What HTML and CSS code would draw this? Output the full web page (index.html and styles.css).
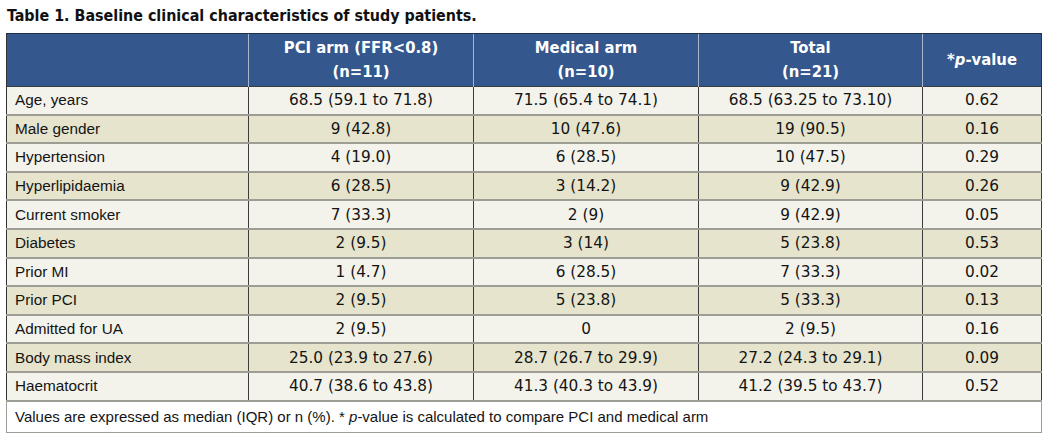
FILE: index.html
```html
<!DOCTYPE html>
<html>
<head>
<meta charset="utf-8">
<link rel="stylesheet" href="styles.css">
</head>
<body>
<div class="page">
  <h1 class="title">Table 1. Baseline clinical characteristics of study patients.</h1>
  <table class="data">
    <colgroup>
      <col class="c1"><col class="c2"><col class="c3"><col class="c4"><col class="c5">
    </colgroup>
    <thead>
      <tr>
        <th></th>
        <th>PCI arm (FFR&lt;0.8)<br>(n=11)</th>
        <th>Medical arm<br>(n=10)</th>
        <th>Total<br>(n=21)</th>
        <th><i>*p</i>-value</th>
      </tr>
    </thead>
    <tbody>
      <tr class="odd"><td>Age, years</td><td>68.5 (59.1 to 71.8)</td><td>71.5 (65.4 to 74.1)</td><td>68.5 (63.25 to 73.10)</td><td>0.62</td></tr>
      <tr class="even"><td>Male gender</td><td>9 (42.8)</td><td>10 (47.6)</td><td>19 (90.5)</td><td>0.16</td></tr>
      <tr class="odd"><td>Hypertension</td><td>4 (19.0)</td><td>6 (28.5)</td><td>10 (47.5)</td><td>0.29</td></tr>
      <tr class="even"><td>Hyperlipidaemia</td><td>6 (28.5)</td><td>3 (14.2)</td><td>9 (42.9)</td><td>0.26</td></tr>
      <tr class="odd"><td>Current smoker</td><td>7 (33.3)</td><td>2 (9)</td><td>9 (42.9)</td><td>0.05</td></tr>
      <tr class="even"><td>Diabetes</td><td>2 (9.5)</td><td>3 (14)</td><td>5 (23.8)</td><td>0.53</td></tr>
      <tr class="odd"><td>Prior MI</td><td>1 (4.7)</td><td>6 (28.5)</td><td>7 (33.3)</td><td>0.02</td></tr>
      <tr class="even"><td>Prior PCI</td><td>2 (9.5)</td><td>5 (23.8)</td><td>5 (33.3)</td><td>0.13</td></tr>
      <tr class="odd"><td>Admitted for UA</td><td>2 (9.5)</td><td>0</td><td>2 (9.5)</td><td>0.16</td></tr>
      <tr class="even"><td>Body mass index</td><td>25.0 (23.9 to 27.6)</td><td>28.7 (26.7 to 29.9)</td><td>27.2 (24.3 to 29.1)</td><td>0.09</td></tr>
      <tr class="odd"><td>Haematocrit</td><td>40.7 (38.6 to 43.8)</td><td>41.3 (40.3 to 43.9)</td><td>41.2 (39.5 to 43.7)</td><td>0.52</td></tr>
    </tbody>
    <tfoot>
      <tr><td colspan="5">Values are expressed as median (IQR) or n (%). * <i>p</i>-value is calculated to compare PCI and medical arm</td></tr>
    </tfoot>
  </table>
</div>
</body>
</html>
```

FILE: styles.css
```css
html, body {
  margin: 0;
  padding: 0;
  background: #ffffff;
}
.page {
  padding: 5px 4px 0 6px;
}
.title {
  margin: 0 0 7px 1px;
  height: 21px;
  font-family: "DejaVu Sans Condensed", "Liberation Sans", sans-serif;
  font-stretch: condensed;
  font-weight: bold;
  font-size: 15.9px;
  line-height: 21px;
  color: #111111;
}
.data {
  width: 1035px;
  border-collapse: collapse;
  table-layout: fixed;
  font-family: "DejaVu Sans", "Liberation Sans", sans-serif;
  font-size: 15.3px;
  color: #141414;
}
.c1 { width: 242px; }
.c2 { width: 225px; }
.c3 { width: 225px; }
.c4 { width: 224px; }
.c5 { width: 119px; }
.data thead th {
  background: #34578d;
  color: #ffffff;
  height: 52px;
  padding: 0;
  font-family: "DejaVu Sans Condensed", "Liberation Sans", sans-serif;
  font-stretch: condensed;
  font-weight: bold;
  font-size: 16.5px;
  line-height: 24px;
  text-align: center;
  vertical-align: middle;
  border-top: 1px solid #1f2f4a;
  border-left: 1.5px solid #a9b6cc;
}
.data thead th:first-child {
  border-left: 1px solid #333333;
}
.data thead th:last-child {
  border-right: 1px solid #333333;
}
.data tbody td {
  height: 26.6px;
  padding: 0;
  text-align: center;
  vertical-align: middle;
  border-top: 2px solid #9d9d96;
  border-left: 1.5px solid #3c3c3c;
  border-right: 1.5px solid #3c3c3c;
}
.data tbody tr:first-child td {
  border-top: 1px solid #3c3c3c;
}
.data tbody td:first-child {
  text-align: left;
  padding-left: 8px;
  font-family: "Liberation Sans", Arial, sans-serif;
  font-size: 15.3px;
  border-left: 1px solid #333333;
}
.data tbody tr.odd td { background: #f3f3eb; }
.data tbody tr.even td { background: #e6e4cd; }
.data tfoot td {
  height: 30px;
  padding: 0 0 0 8px;
  background: #ffffff;
  border: 1px solid #9d9d96;
  border-top: 2px solid #9d9d96;
  font-family: "Liberation Sans", Arial, sans-serif;
  font-size: 15px;
  vertical-align: middle;
}
```
